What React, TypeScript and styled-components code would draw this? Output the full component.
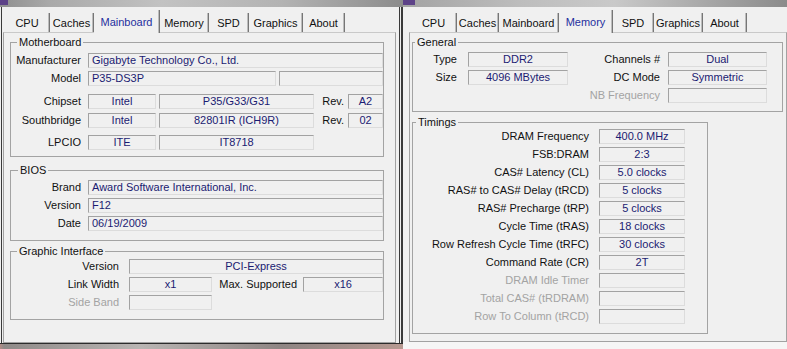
import React from 'react'
import styled, { createGlobalStyle } from 'styled-components'

const GlobalStyle = createGlobalStyle`
  html, body {
    margin: 0;
    padding: 0;
    background: #f0f0f0;
  }
  body {
    font-family: 'Liberation Sans', Arial, sans-serif;
    font-size: 11px;
  }
`

const Screen = styled.div`
  display: flex;
  width: 787px;
  height: 349px;
  overflow: hidden;
  background: #f0f0f0;
`

const Window = styled.div<{ $w: number }>`
  flex: none;
  display: flex;
  flex-direction: column;
  width: ${(p) => p.$w}px;
  height: 349px;
`

const TitleStrip = styled.div<{ $bg: string }>`
  flex: none;
  display: flex;
  height: 7px;
  background: ${(p) => p.$bg};
`

const AppIcon = styled.span<{ $w: number }>`
  flex: none;
  width: ${(p) => p.$w}px;
  height: 5px;
  background: #5d4288;
`

const Body = styled.div<{ $framed?: boolean; $pl: number }>`
  flex: none;
  display: flex;
  flex-direction: column;
  padding-left: ${(p) => p.$pl}px;
  padding-right: ${(p) => (p.$framed ? 7 : 0)}px;
  box-shadow: ${(p) =>
    p.$framed
      ? 'inset 1px 0 0 #f0f0f0, inset 2px 0 0 #3a3a3a, inset -2px 0 0 #3a3a3a, inset -3px 0 0 #eeeeee, inset -4px 0 0 #3a3a3a'
      : 'none'};
`

const TabStrip = styled.div`
  position: relative;
  z-index: 1;
  display: flex;
  align-items: flex-end;
  height: 25px;
  padding-left: 2px;
`

const Tab = styled.div<{ $w: number; $active?: boolean }>`
  flex: none;
  box-sizing: border-box;
  width: ${(p) => p.$w}px;
  height: ${(p) => (p.$active ? 23 : 19)}px;
  margin-bottom: ${(p) => (p.$active ? -1 : 0)}px;
  padding-top: ${(p) => (p.$active ? 4 : 2)}px;
  line-height: 17px;
  text-align: center;
  white-space: nowrap;
  color: ${(p) => (p.$active ? '#1f2f9e' : '#111')};
  background: #f0f0f0;
  border-right: 1px solid #767676;
  box-shadow: inset -1px 0 0 #bcbcbc;
`

const Page = styled.div<{ $w: number; $h: number; $pad: string }>`
  flex: none;
  box-sizing: border-box;
  width: ${(p) => p.$w}px;
  height: ${(p) => p.$h}px;
  padding: ${(p) => p.$pad};
  border: 1px solid #a2a2a2;
  border-top-color: #c9c9c9;
  background: #f0f0f0;
`

const BottomBar = styled.div`
  flex: none;
  height: 5px;
  border-top: 1px solid #2c2c2c;
  background: linear-gradient(90deg, #b48c86 0, #8f8a88 1%, #b9b5b3 35%, #8e8583 70%, #b79a92 100%);
`

const BottomFill = styled.div`
  flex: 1;
  background: #f6f6f6;
`

// group box: the border runs through the middle of the caption
const Group = styled.fieldset<{ $w?: number; $top?: number; $pad: string }>`
  box-sizing: border-box;
  min-width: 0;
  width: ${(p) => (p.$w ? `${p.$w}px` : 'auto')};
  margin: ${(p) => p.$top ?? 0}px 0 0 0;
  padding: ${(p) => p.$pad};
  border: 1px solid #a3a3a3;
`

const Caption = styled.legend<{ $ml: number }>`
  height: 13px;
  margin-left: ${(p) => p.$ml}px;
  padding: 0 2px;
  line-height: 13px;
  color: #111;
`

const Rows = styled.div`
  display: flex;
  flex-direction: column;
`

const Row = styled.div<{ $top?: number; $gap?: number }>`
  display: flex;
  height: 15px;
  gap: ${(p) => p.$gap ?? 3}px;
  margin-top: ${(p) => p.$top ?? 3}px;

  &:first-child {
    margin-top: 0;
  }
`

const Label = styled.span<{ $w: number; $pr: number; $dim?: boolean }>`
  flex: none;
  box-sizing: border-box;
  width: ${(p) => p.$w}px;
  padding-right: ${(p) => p.$pr}px;
  line-height: 15px;
  text-align: right;
  white-space: nowrap;
  color: ${(p) => (p.$dim ? '#a3a3a3' : '#111')};
`

const Field = styled.div<{ $w?: number; $left?: boolean }>`
  flex: ${(p) => (p.$w ? 'none' : '1 1 0')};
  box-sizing: border-box;
  width: ${(p) => (p.$w ? `${p.$w}px` : 'auto')};
  min-width: 0;
  height: 15px;
  padding: 0 3px;
  border: 1px solid;
  border-color: #a2a2a2 #dcdcdc #dcdcdc #a2a2a2;
  line-height: 13px;
  text-align: ${(p) => (p.$left ? 'left' : 'center')};
  white-space: nowrap;
  overflow: hidden;
  color: #1b1b72;
`

const Spacer = styled.span<{ $w: number }>`
  flex: none;
  width: ${(p) => p.$w}px;
`

interface TabDef {
  name: string
  w: number
}

const leftTabs: TabDef[] = [
  { name: 'CPU', w: 45 },
  { name: 'Caches', w: 44 },
  { name: 'Mainboard', w: 66 },
  { name: 'Memory', w: 49 },
  { name: 'SPD', w: 40 },
  { name: 'Graphics', w: 54 },
  { name: 'About', w: 42 }
]

const rightTabs: TabDef[] = [
  { name: 'CPU', w: 46 },
  { name: 'Caches', w: 42 },
  { name: 'Mainboard', w: 60 },
  { name: 'Memory', w: 54 },
  { name: 'SPD', w: 41 },
  { name: 'Graphics', w: 49 },
  { name: 'About', w: 44 }
]

const timings = [
  { label: 'DRAM Frequency', value: '400.0 MHz' },
  { label: 'FSB:DRAM', value: '2:3' },
  { label: 'CAS# Latency (CL)', value: '5.0 clocks' },
  { label: 'RAS# to CAS# Delay (tRCD)', value: '5 clocks' },
  { label: 'RAS# Precharge (tRP)', value: '5 clocks' },
  { label: 'Cycle Time (tRAS)', value: '18 clocks' },
  { label: 'Row Refresh Cycle Time (tRFC)', value: '30 clocks' },
  { label: 'Command Rate (CR)', value: '2T' },
  { label: 'DRAM Idle Timer', value: '', dim: true },
  { label: 'Total CAS# (tRDRAM)', value: '', dim: true },
  { label: 'Row To Column (tRCD)', value: '', dim: true }
]

function Tabs({ tabs, active }: { tabs: TabDef[]; active: string }) {
  return (
    <TabStrip>
      {tabs.map((tab) => (
        <Tab key={tab.name} $w={tab.w} $active={tab.name === active}>
          {tab.name}
        </Tab>
      ))}
    </TabStrip>
  )
}

function Mainboard() {
  return (
    <Page $w={393} $h={311} $pad="3px 11px 0 6px">
      <Group $pad="4px 0 6px 0">
        <Caption $ml={6}>Motherboard</Caption>
        <Rows>
          <Row>
            <Label $w={74} $pr={4}>Manufacturer</Label>
            <Field $left>Gigabyte Technology Co., Ltd.</Field>
          </Row>
          <Row $top={3}>
            <Label $w={74} $pr={4}>Model</Label>
            <Field $w={188} $left>P35-DS3P</Field>
            <Field />
          </Row>
          <Row $top={8}>
            <Label $w={74} $pr={4}>Chipset</Label>
            <Field $w={68}>Intel</Field>
            <Field $w={155}>P35/G33/G31</Field>
            <Label $w={28} $pr={1}>Rev.</Label>
            <Field>A2</Field>
          </Row>
          <Row $top={4}>
            <Label $w={74} $pr={4}>Southbridge</Label>
            <Field $w={68}>Intel</Field>
            <Field $w={155}>82801IR (ICH9R)</Field>
            <Label $w={28} $pr={1}>Rev.</Label>
            <Field>02</Field>
          </Row>
          <Row $top={7}>
            <Label $w={74} $pr={4}>LPCIO</Label>
            <Field $w={68}>ITE</Field>
            <Field $w={155}>IT8718</Field>
          </Row>
        </Rows>
      </Group>

      <Group $top={7} $pad="3px 0 9px 0">
        <Caption $ml={7}>BIOS</Caption>
        <Rows>
          <Row>
            <Label $w={74} $pr={4}>Brand</Label>
            <Field $left>Award Software International, Inc.</Field>
          </Row>
          <Row>
            <Label $w={74} $pr={4}>Version</Label>
            <Field $left>F12</Field>
          </Row>
          <Row>
            <Label $w={74} $pr={4}>Date</Label>
            <Field $left>06/19/2009</Field>
          </Row>
        </Rows>
      </Group>

      <Group $top={4} $pad="1px 0 9px 0">
        <Caption $ml={6}>Graphic Interface</Caption>
        <Rows>
          <Row>
            <Label $w={115} $pr={7}>Version</Label>
            <Field>PCI-Express</Field>
          </Row>
          <Row>
            <Label $w={115} $pr={7}>Link Width</Label>
            <Field $w={83}>x1</Field>
            <Label $w={85} $pr={3}>Max. Supported</Label>
            <Field>x16</Field>
          </Row>
          <Row>
            <Label $w={115} $pr={7} $dim>Side Band</Label>
            <Field $w={83} />
          </Row>
        </Rows>
      </Group>
    </Page>
  )
}

function Memory() {
  return (
    <Page $w={378} $h={310} $pad="3px 3px 0 2px">
      <Group $pad="3px 0 8px 0">
        <Caption $ml={2}>General</Caption>
        <Rows>
          <Row $gap={0}>
            <Label $w={55} $pr={11}>Type</Label>
            <Field $w={100}>DDR2</Field>
            <Label $w={100} $pr={8}>Channels #</Label>
            <Field $w={99}>Dual</Field>
          </Row>
          <Row $gap={0}>
            <Label $w={55} $pr={11}>Size</Label>
            <Field $w={100}>4096 MBytes</Field>
            <Label $w={100} $pr={8}>DC Mode</Label>
            <Field $w={99}>Symmetric</Field>
          </Row>
          <Row $gap={0}>
            <Spacer $w={155} />
            <Label $w={100} $pr={8} $dim>NB Frequency</Label>
            <Field $w={99} />
          </Row>
        </Rows>
      </Group>

      <Group $w={296} $top={4} $pad="0 0 9px 0">
        <Caption $ml={3}>Timings</Caption>
        <Rows>
          {timings.map((t) => (
            <Row key={t.label} $gap={0}>
              <Label $w={186} $pr={10} $dim={t.dim}>{t.label}</Label>
              <Field $w={86}>{t.value}</Field>
            </Row>
          ))}
        </Rows>
      </Group>
    </Page>
  )
}

export default function App() {
  return (
    <>
      <GlobalStyle />
      <Screen>
        <Window $w={403}>
          <TitleStrip $bg="linear-gradient(90deg, #8f8f8f 0%, #a9a9a9 12%, #c2c2c2 40%, #b3b3b3 70%, #8c8c8c 100%)">
            <AppIcon $w={8} />
          </TitleStrip>
          <Body $framed $pl={3}>
            <Tabs tabs={leftTabs} active="Mainboard" />
            <Mainboard />
          </Body>
          <BottomBar />
        </Window>

        <Window $w={384}>
          <TitleStrip $bg="linear-gradient(90deg, #a3a3a3 0%, #bdbdbd 30%, #c9c9c9 55%, #a6a6a6 80%, #8b8b8b 100%)">
            <AppIcon $w={12} />
          </TitleStrip>
          <Body $pl={6}>
            <Tabs tabs={rightTabs} active="Memory" />
            <Memory />
          </Body>
          <BottomFill />
        </Window>
      </Screen>
    </>
  )
}
